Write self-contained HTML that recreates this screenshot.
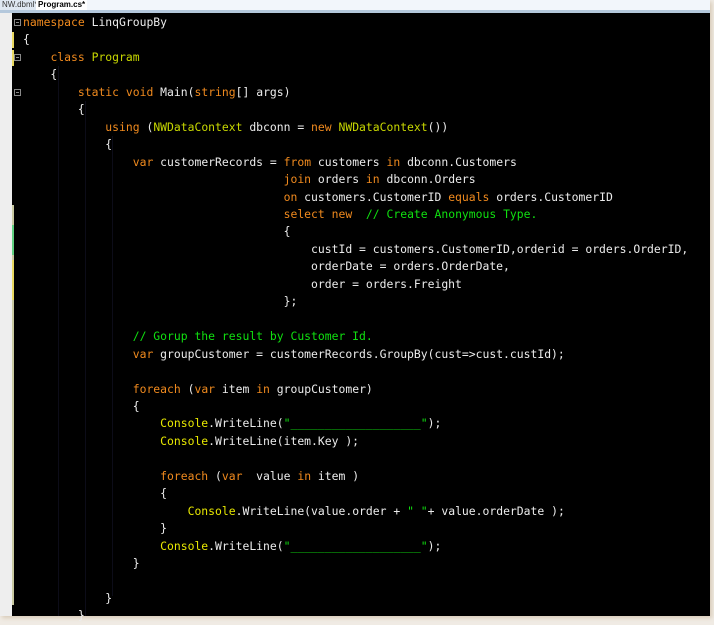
<!DOCTYPE html>
<html><head><meta charset="utf-8"><style>
html,body{margin:0;padding:0;width:714px;height:620px;overflow:hidden;background:#f0ebe4;}
#win{position:absolute;left:0;top:0;width:710px;height:616px;background:#000;box-shadow:2px 2px 4px #d8cbb8;}
#tabs{position:absolute;left:0;top:0;width:710px;height:10px;background:#f2f6fb;border-bottom:3px solid #b4c8dc;}
.tab{position:absolute;top:0;height:10px;font:8px "Liberation Sans",sans-serif;line-height:10px;padding:0 2px;color:#000;}
#gut{position:absolute;left:0;top:13px;width:12px;height:603px;background:#eeeeee;}
.mk{position:absolute;left:12px;width:2px;}
.box{position:absolute;left:14px;width:7px;height:7px;border:1px solid #888;box-sizing:border-box;}
.box:after{content:"";position:absolute;left:1px;top:2px;width:3px;height:1px;background:#888;}
pre{position:absolute;left:23px;top:14px;margin:0;font:11.4px "DejaVu Sans Mono","Liberation Mono",monospace;line-height:17.45px;color:#ececec;}
.k{color:#f08a1e}.t{color:#c8d800}.y{color:#e8e800}.c{color:#10e010}.s{color:#10e010}
.g{position:absolute;width:1px;background:#0c0c18;}
</style></head><body>
<div id="win">
<div id="tabs"><span class="tab" style="left:0;background:#dfe8f2;color:#333">NW.dbml*</span><span class="tab" style="left:36px;background:#fff;font-weight:bold">Program.cs*</span></div>
<div id="gut"></div>
<div class="mk" style="top:32px;height:16px;background:#e8d860"></div>
<div class="mk" style="top:50px;height:16px;background:#e8d860"></div>
<div class="mk" style="top:205px;height:400px;background:#c8c8a0"></div>
<div class="mk" style="top:225px;height:30px;background:#60d080"></div>
<div class="mk" style="top:260px;height:40px;background:#e8d860"></div>
<div class="box" style="top:19px"></div>
<div class="box" style="top:54px"></div>
<div class="box" style="top:89px"></div>
<div class="g" style="left:58px;top:66px;height:550px"></div>
<div class="g" style="left:85px;top:101px;height:515px"></div>
<div class="g" style="left:112px;top:136px;height:460px"></div>
<pre><span class="k">namespace</span> LinqGroupBy
{
    <span class="k">class</span> <span class="t">Program</span>
    {
        <span class="k">static</span> <span class="k">void</span> Main(<span class="k">string</span>[] args)
        {
            <span class="k">using</span> (<span class="t">NWDataContext</span> dbconn = <span class="k">new</span> <span class="t">NWDataContext</span>())
            {
                <span class="k">var</span> customerRecords = <span class="k">from</span> customers <span class="k">in</span> dbconn.Customers
                                      <span class="k">join</span> orders <span class="k">in</span> dbconn.Orders
                                      <span class="k">on</span> customers.CustomerID <span class="k">equals</span> orders.CustomerID
                                      <span class="k">select</span> <span class="k">new</span>  <span class="c">// Create Anonymous Type.</span>
                                      {
                                          custId = customers.CustomerID,orderid = orders.OrderID,
                                          orderDate = orders.OrderDate,
                                          order = orders.Freight
                                      };

                <span class="c">// Gorup the result by Customer Id.</span>
                <span class="k">var</span> groupCustomer = customerRecords.GroupBy(cust=&gt;cust.custId);

                <span class="k">foreach</span> (<span class="k">var</span> item <span class="k">in</span> groupCustomer)
                {
                    <span class="y">Console</span>.WriteLine(<span class="s">"___________________"</span>);
                    <span class="y">Console</span>.WriteLine(item.Key );

                    <span class="k">foreach</span> (<span class="k">var</span>  value <span class="k">in</span> item )
                    {
                        <span class="y">Console</span>.WriteLine(value.order + <span class="s">" "</span>+ value.orderDate );
                    }
                    <span class="y">Console</span>.WriteLine(<span class="s">"___________________"</span>);
                }

            }
        }
</pre>
</div>
</body></html>
